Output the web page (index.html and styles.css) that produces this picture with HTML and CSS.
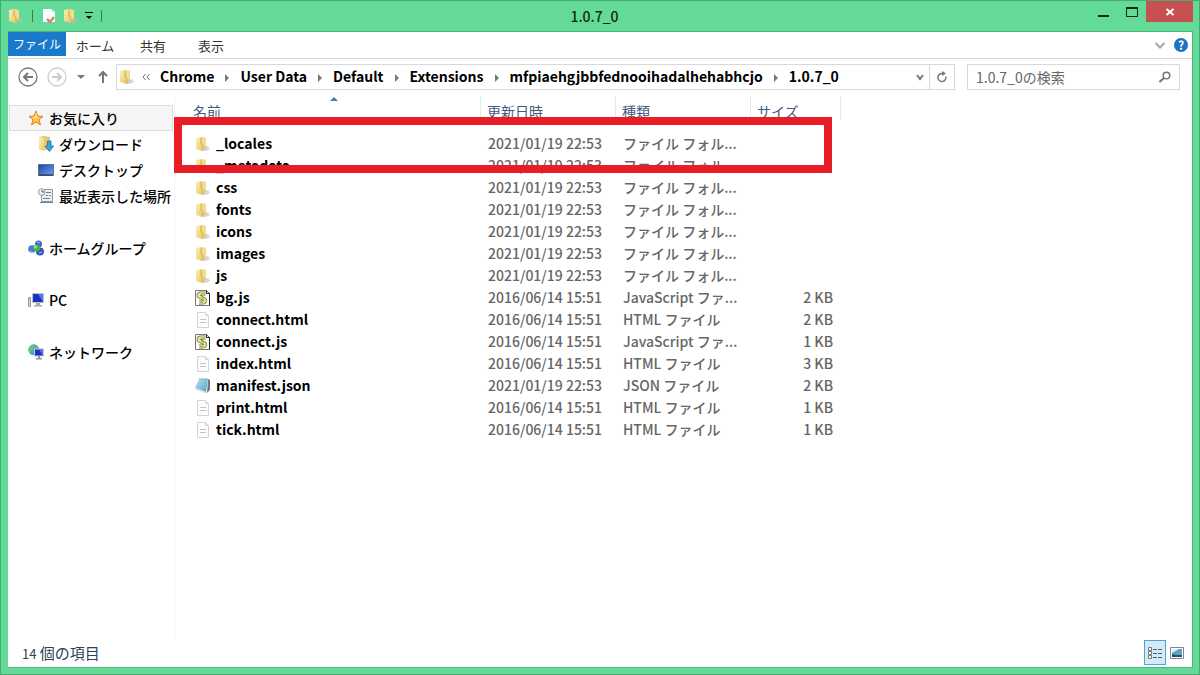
FILE: index.html
```html
<!DOCTYPE html>
<html lang="ja">
<head>
<meta charset="utf-8">
<title>1.0.7_0</title>
<link rel="stylesheet" href="styles.css">
</head>
<body>
<svg class="sprite" aria-hidden="true">
  <defs>
    <linearGradient id="gold" x1="0" x2="1" y1="0" y2="1"><stop offset="0" stop-color="#fbf0bb"/><stop offset="1" stop-color="#e6c560"/></linearGradient>
    <linearGradient id="blue" x1="0" x2="1" y1="0" y2="1"><stop offset="0" stop-color="#1c3fae"/><stop offset="1" stop-color="#6da4ee"/></linearGradient>
    <linearGradient id="note" x1="0" x2="1" y1="0" y2="1"><stop offset="0" stop-color="#bfe6ef"/><stop offset="1" stop-color="#4ba3be"/></linearGradient>
    <symbol id="folder" viewBox="0 0 16 16"><path d="M9 11l4-1 2 3-4 2H5z" fill="#bbb" opacity=".6"/><path d="M5 1l6 1v9l-3 3H5z" fill="#e0c262"/><path d="M6 1l5 1v8l-3 2z" fill="#f2dd8e"/><path d="M1 2l5-1v7l2 1v6l-7-2z" fill="url(#gold)"/><path d="M6 2v6l2 1v5" fill="none" stroke="#cfae4c" stroke-width=".8"/></symbol>
    <symbol id="html" viewBox="0 0 16 16"><path d="M2.500 .5h8l3 3v12h-11z" fill="#fcfcfc" stroke="#d4d4d4"/><path d="M10.500 .5v3h3" fill="none" stroke="#d4d4d4"/><path d="M5 7.500h6M5 10.500h6" stroke="#c4c4c4"/></symbol>
    <symbol id="script" viewBox="0 0 16 16"><path d="M.5 .5h11l3 3v12H.5z" fill="#fff" stroke="#777"/><path d="M11.500 .5v3h3v12" fill="none" stroke="#222"/><path d="M10.500 3.500H6C3 3.500 3 6.500 5 7l4 2c2 1 1 3.500-1 3.500H4" fill="none" stroke="#77773a" stroke-width="4"/><path d="M10.500 3.500H6C3 3.500 3 6.500 5 7l4 2c2 1 1 3.500-1 3.500H4" fill="none" stroke="#e4e39a" stroke-width="2.400"/><path d="M6 4h4M6 7l3 2M5 12.500h3" stroke="#8d8d4e" stroke-width=".7"/></symbol>
    <symbol id="json" viewBox="0 0 16 16"><path d="M13 1l2 1v10l-3 3z" fill="#777"/><path d="M4 1h9l-2 13-11-4z" fill="url(#note)"/><path d="M0 11l11 4 1-1" fill="none" stroke="#ddd"/><path d="M4 1h9" stroke="#89aeb9"/></symbol>
    <symbol id="star" viewBox="0 0 16 16"><path d="M8 1l2 5 5 .4-4 3.300L12.500 15 8 12l-4.500 3L5 9.700 1 6.400 6 6z" fill="#ffc74a" stroke="#e47f25"/><path d="M8 3l1 4-4 1" fill="none" stroke="#ffeaa0"/></symbol>
    <symbol id="download" viewBox="0 0 16 16"><path d="M1 1l5-1 6 1v13H3l-2-1z" fill="#e4c768"/><path d="M1 1l5 1 1 13-6-2z" fill="url(#gold)"/><path d="M9.500 5h3.500v5h2.500l-4 5.500-4.500-5.500h2.500z" fill="#38a5e8" stroke="#1771ae" stroke-width=".8"/></symbol>
    <symbol id="desktop" viewBox="0 0 16 16"><path d="M.5 2.500h15v11H.5z" fill="url(#blue)" stroke="#66707d"/><path d="M1 13h14" stroke="#1d2a43"/></symbol>
    <symbol id="recent" viewBox="0 0 16 16"><path d="M5 1.500h9.500v12H3.500V7" fill="#edf1f5" stroke="#8c98a4"/><path d="M8 4.500h5M8 7.500h2m1 0h2M5 10.500h7M2 14.500h13" stroke="#6684a0"/><circle cx="3.800" cy="4" r="3.300" fill="#f7f7f7" stroke="#8c98a4"/><path d="M4 2v2h2" fill="none" stroke="#555"/></symbol>
    <symbol id="homegroup" viewBox="0 0 16 16"><circle cx="10.500" cy="4" r="3.500" fill="#3e69c9"/><circle cx="4" cy="9" r="3.800" fill="#4a7ad4"/><circle cx="12" cy="11.500" r="4" fill="#3158b3"/><circle cx="8.500" cy="8" r="3.500" fill="#42b252"/><circle cx="7.500" cy="7" r="1.400" fill="#a2e5a0"/><path d="M2 11l4 2M11 13l3-1M9 2l3 1" stroke="#a9c4f4"/></symbol>
    <symbol id="pc" viewBox="0 0 16 16"><path d="M.5 5.500h2v9h-2z" fill="#d5d5d5" stroke="#999"/><path d="M4 1h12v10H4z" fill="#bfc3ca"/><path d="M5 2h10v8H5z" fill="#1b2fc4"/><path d="M10 2h5v8z" fill="#5876e4"/><path d="M8 11h4v2h2v1.500H6V13h2z" fill="#a9a9a9"/></symbol>
    <symbol id="network" viewBox="0 0 16 16"><circle cx="5.800" cy="5.800" r="5.500" fill="#4ba6cc"/><path d="M2 3c3-3 5-1 4 1S3 6 2 9C0 7 0 5 2 3zM8 1l3 3-3 1z" fill="#6ec46a"/><path d="M6 4.500h10v8H6z" fill="#c5c9d1"/><path d="M7 5.500h8v6H7z" fill="#1c32c4"/><path d="M11 5.500h4v6z" fill="#5674e2"/><path d="M10 12h2v2h2v1.500H8V14h2z" fill="#8d97a3"/></symbol>
    <symbol id="props" viewBox="0 0 16 16"><path d="M2 1h8l4 3v10H2z" fill="#fff"/><path d="M10 1v3h4" fill="#dde3e6"/><path d="M6 11l3 3 4-5" fill="none" stroke="#e0806c" stroke-width="2.500"/></symbol>
  </defs>
</svg>
<div class="window">
  <header class="titlebar">
    <div class="quick">
      <svg class="icon"><use href="#folder"/></svg>
      <span class="bar"></span>
      <button class="plain" aria-label="プロパティ"><svg class="icon"><use href="#props"/></svg></button>
      <button class="plain" aria-label="新しいフォルダー"><svg class="icon"><use href="#folder"/></svg></button>
      <button class="plain" aria-label="カスタマイズ"><svg class="tiny" viewBox="0 0 8 8"><path d="M0 .5h8" stroke="#000"/><path d="M1 4h6L4 7z"/></svg></button>
      <span class="bar"></span>
    </div>
    <h1 class="title">1.0.7_0</h1>
    <div class="controls">
      <button class="plain ctl" aria-label="最小化"><svg viewBox="0 0 12 12"><path d="M0 9h11v2H0z"/></svg></button>
      <button class="plain ctl" aria-label="最大化"><svg viewBox="0 0 12 12"><path d="M.5 1.500h11v9H.5z" fill="none" stroke="#10291b"/><path d="M0 1h12v2H0z"/></svg></button>
      <button class="plain close" aria-label="閉じる"><svg viewBox="0 0 12 12"><path d="M2.500 3l7 6m0-6l-7 6" stroke="#fff" stroke-width="2"/></svg></button>
    </div>
  </header>
  <main class="client">
    <nav class="tabs">
      <button class="tab file">ファイル</button>
      <button class="tab">ホーム</button>
      <button class="tab">共有</button>
      <button class="tab">表示</button>
      <div class="tab-tools">
        <button class="plain" aria-label="リボンの展開"><svg class="chev" viewBox="0 0 12 12"><path d="M1.500 4L6 8.500 10.500 4" fill="none" stroke="#a6a6a6" stroke-width="2"/></svg></button>
        <button class="help" aria-label="ヘルプ">?</button>
      </div>
    </nav>
    <div class="navrow">
      <button class="plain back" aria-label="戻る"><svg viewBox="0 0 20 20"><circle cx="10" cy="10" r="9" fill="none" stroke="#777" stroke-width="1.300"/><path d="M15 10H6m4-4l-4 4 4 4" fill="none" stroke="#777" stroke-width="2"/></svg></button>
      <button class="plain fwd" aria-label="進む"><svg viewBox="0 0 20 20"><circle cx="10" cy="10" r="9" fill="none" stroke="#ccc" stroke-width="1.300"/><path d="M5 10h9m-4-4l4 4-4 4" fill="none" stroke="#ccc" stroke-width="2"/></svg></button>
      <button class="plain hist" aria-label="履歴"><svg viewBox="0 0 8 8"><path d="M0 2h8L4 6z" fill="#777"/></svg></button>
      <button class="plain up" aria-label="上へ"><svg viewBox="0 0 12 14"><path d="M6 13V2M2 6l4-4 4 4" fill="none" stroke="#777" stroke-width="2"/></svg></button>
      <div class="address">
        <svg class="icon"><use href="#folder"/></svg>
        <svg class="more" viewBox="0 0 8 8"><path d="M3.500 1L1 4l2.500 3M7.500 1L5 4l2.500 3" fill="none" stroke="#777"/></svg>
        <a class="crumb" href="#">Chrome</a>
        <a class="crumb" href="#">User Data</a>
        <a class="crumb" href="#">Default</a>
        <a class="crumb" href="#">Extensions</a>
        <a class="crumb" href="#">mfpiaehgjbbfednooihadalhehabhcjo</a>
        <a class="crumb" href="#">1.0.7_0</a>
        <button class="plain drop" aria-label="以前の場所"><svg viewBox="0 0 10 10"><path d="M2 3l3 4 3-4" fill="none" stroke="#777" stroke-width="2"/></svg></button>
        <button class="plain refresh" aria-label="更新"><svg viewBox="0 0 12 12"><path d="M7 2.500H5.500a4 4 0 1 0 4.300 3" fill="none" stroke="#777" stroke-width="1.500"/><path d="M6 0l4 2.500L6 5z" fill="#777"/></svg></button>
      </div>
      <div class="search">
        <input type="search" aria-label="検索" placeholder="1.0.7_0の検索">
        <svg viewBox="0 0 12 12"><circle cx="7.500" cy="4.500" r="3.300" fill="none" stroke="#777" stroke-width="1.500"/><path d="M5 7l-4.500 4" stroke="#777" stroke-width="2"/></svg>
      </div>
    </div>
    <div class="panes">
      <aside class="sidebar">
        <ul class="group">
          <li class="item selected"><svg class="icon"><use href="#star"/></svg>お気に入り</li>
          <li class="item child"><svg class="icon"><use href="#download"/></svg>ダウンロード</li>
          <li class="item child"><svg class="icon"><use href="#desktop"/></svg>デスクトップ</li>
          <li class="item child"><svg class="icon"><use href="#recent"/></svg>最近表示した場所</li>
        </ul>
        <ul class="group"><li class="item"><svg class="icon"><use href="#homegroup"/></svg>ホームグループ</li></ul>
        <ul class="group"><li class="item"><svg class="icon"><use href="#pc"/></svg>PC</li></ul>
        <ul class="group"><li class="item"><svg class="icon"><use href="#network"/></svg>ネットワーク</li></ul>
      </aside>
      <section class="files">
        <table>
          <colgroup><col class="c-name"><col class="c-date"><col class="c-type"><col class="c-size"></colgroup>
          <thead><tr><th>名前<svg class="sort" viewBox="0 0 8 4"><path d="M0 4l4-4 4 4z" fill="#4f7fa0"/></svg></th><th>更新日時</th><th>種類</th><th>サイズ</th></tr></thead>
          <tbody>
            <tr><td><svg class="icon"><use href="#folder"/></svg>_locales</td><td>2021/01/19 22:53</td><td>ファイル フォル...</td><td></td></tr>
            <tr><td><svg class="icon"><use href="#folder"/></svg>_metadata</td><td>2021/01/19 22:53</td><td>ファイル フォル...</td><td></td></tr>
            <tr><td><svg class="icon"><use href="#folder"/></svg>css</td><td>2021/01/19 22:53</td><td>ファイル フォル...</td><td></td></tr>
            <tr><td><svg class="icon"><use href="#folder"/></svg>fonts</td><td>2021/01/19 22:53</td><td>ファイル フォル...</td><td></td></tr>
            <tr><td><svg class="icon"><use href="#folder"/></svg>icons</td><td>2021/01/19 22:53</td><td>ファイル フォル...</td><td></td></tr>
            <tr><td><svg class="icon"><use href="#folder"/></svg>images</td><td>2021/01/19 22:53</td><td>ファイル フォル...</td><td></td></tr>
            <tr><td><svg class="icon"><use href="#folder"/></svg>js</td><td>2021/01/19 22:53</td><td>ファイル フォル...</td><td></td></tr>
            <tr><td><svg class="icon"><use href="#script"/></svg>bg.js</td><td>2016/06/14 15:51</td><td>JavaScript ファ...</td><td>2 KB</td></tr>
            <tr><td><svg class="icon"><use href="#html"/></svg>connect.html</td><td>2016/06/14 15:51</td><td>HTML ファイル</td><td>2 KB</td></tr>
            <tr><td><svg class="icon"><use href="#script"/></svg>connect.js</td><td>2016/06/14 15:51</td><td>JavaScript ファ...</td><td>1 KB</td></tr>
            <tr><td><svg class="icon"><use href="#html"/></svg>index.html</td><td>2016/06/14 15:51</td><td>HTML ファイル</td><td>3 KB</td></tr>
            <tr><td><svg class="icon"><use href="#json"/></svg>manifest.json</td><td>2021/01/19 22:53</td><td>JSON ファイル</td><td>2 KB</td></tr>
            <tr><td><svg class="icon"><use href="#html"/></svg>print.html</td><td>2016/06/14 15:51</td><td>HTML ファイル</td><td>1 KB</td></tr>
            <tr><td><svg class="icon"><use href="#html"/></svg>tick.html</td><td>2016/06/14 15:51</td><td>HTML ファイル</td><td>1 KB</td></tr>
          </tbody>
        </table>
        <div class="highlight"></div>
      </section>
    </div>
    <footer class="status">
      <span><small>14</small> 個の項目</span>
      <div class="views">
        <button class="plain view on" aria-label="詳細"><svg viewBox="0 0 16 16"><path d="M1.500 2.500h3v3h-3zM1.500 6.500h3v3h-3zM1.500 10.500h3v3h-3z" fill="#fff" stroke="#777"/><path d="M6 4.500h4m1 0h4M6 8.500h4m1 0h4M6 12.500h4m1 0h4" stroke="#4c6478"/></svg></button>
        <button class="plain view" aria-label="大アイコン"><svg viewBox="0 0 16 16"><path d="M1.500 2.500h13v11h-13z" fill="#fff" stroke="#7b8791"/><path d="M3 4h10v8H3z" fill="#5aa3c6"/><path d="M3 4h7l-7 4z" fill="#d8eff9"/><path d="M3 9l4 1 6 0v2H3z" fill="#275468"/></svg></button>
      </div>
    </footer>
  </main>
</div>
</body>
</html>
```
FILE: styles.css
```css
* { box-sizing: border-box; }
body { margin: 0; font-family: "Noto Sans CJK JP", "Noto Sans", sans-serif; font-size: 14px; line-height: 22px; color: #000; }
.sprite { position: absolute; width: 0; height: 0; }
button, input { font: inherit; color: inherit; }
.plain { display: flex; align-items: center; justify-content: center; padding: 0; border: 0; background: none; }
.icon { width: 16px; height: 16px; flex: none; }
.window { display: flex; flex-direction: column; min-height: 100vh; padding: 0 6px 6px 7px; border: 1px solid #42ad70; background: #63da97; }
.titlebar { display: grid; grid-template-columns: 1fr auto 1fr; height: 30px; }
.quick { display: flex; align-items: center; gap: 7px; height: 30px; }
.quick .plain + .plain { margin-left: -1px; }
.bar { width: 1px; height: 12px; margin: 0 1px; background: #347a52; }
.tiny { width: 8px; height: 8px; }
.title { margin: 0 12px 0 0; font-size: 14px; font-weight: 500; line-height: 31px; color: #10291b; }
.controls { display: flex; justify-content: flex-end; align-items: flex-start; }
.controls svg { width: 12px; height: 12px; fill: #10291b; }
.ctl { width: 28px; height: 21px; }
.close { width: 47px; height: 21px; background: #c75050; }
.client { display: flex; flex-direction: column; flex: 1; border: 1px solid #4cb67a; border-left: 0; background: #fff; }
.tabs { display: flex; height: 27px; border-bottom: 1px solid #d5d6d7; }
.tab { width: 58px; padding: 2px 0 0; border: 0; background: none; font-size: 13px; line-height: 22px; color: #333; white-space: nowrap; }
.file { height: 24px; padding: 0; background: #1979ca; font-size: 12px; color: #fff; }
.tab-tools { display: flex; align-items: center; gap: 8px; margin-left: auto; padding-right: 4px; }
.chev { width: 12px; height: 12px; }
.help { width: 14px; height: 14px; padding: 0; border: 0; border-radius: 50%; background: #1c72c4; color: #fff; font-size: 12px; font-weight: 700; line-height: 14px; }
.navrow { display: flex; align-items: center; height: 36px; padding: 0 12px 0 10px; }
.back, .fwd { width: 20px; height: 20px; margin-right: 9px; }
.back svg, .fwd svg { width: 20px; height: 20px; }
.hist { width: 10px; margin-right: 11px; }
.hist svg { width: 8px; height: 8px; }
.up { width: 12px; margin-right: 7px; }
.up svg { width: 12px; height: 14px; }
.address { display: flex; align-items: center; flex: 1; height: 26px; padding-left: 2px; border: 1px solid #d9d9d9; font-weight: 700; line-height: 20px; white-space: nowrap; }
.address .crumb { padding-bottom: 2px; }
.more { width: 8px; height: 8px; margin: 0 10px 0 7px; }
.crumb { color: #000; text-decoration: none; }
.crumb + .crumb::before { content: ""; display: inline-block; margin: 0 11px; border: 4px solid transparent; border-left-color: #777; border-right: 0; }
.drop { width: 18px; height: 24px; margin-left: auto; }
.drop svg { width: 10px; height: 10px; }
.refresh { width: 25px; height: 24px; border-left: 1px solid #d9d9d9; }
.refresh svg { width: 12px; height: 12px; }
.search { display: flex; align-items: center; width: 213px; height: 26px; margin-left: 12px; padding: 0 8px; border: 1px solid #d9d9d9; }
.search input { flex: 1; min-width: 0; padding: 0; border: 0; outline: 0; background: none; }
.search input::placeholder { color: #666; opacity: 1; }
.search svg { width: 12px; height: 12px; }
.panes { display: flex; flex: 1; }
.sidebar { width: 167px; padding: 10px 1px 0; border-right: 1px solid #f3f5f6; }
.group { margin: 0 0 26px; padding: 0; list-style: none; }
.item { display: flex; align-items: center; gap: 5px; height: 26px; padding-left: 19px; font-weight: 500; white-space: nowrap; }
.selected { padding-left: 18px; border: 1px solid #dedede; background: #f6f6f6; }
.child { padding-left: 29px; }
.files { position: relative; flex: 1; padding-left: 6px; }
table { width: 660px; table-layout: fixed; border-collapse: collapse; }
.c-name { width: 300px; }
.c-date, .c-type { width: 135px; }
.c-size { width: 90px; }
th { position: relative; height: 37px; padding: 5px 6px 10px; background: linear-gradient(#e1ecf3, #e1ecf3) right 1px / 1px 24px no-repeat; text-align: left; font-weight: 400; color: #43597c; }
th:first-child { padding-left: 12px; }
.sort { position: absolute; left: 149px; top: 2px; width: 8px; height: 4px; }
td { height: 22px; padding: 0 7px; color: #666; font-weight: 500; white-space: nowrap; }
td:first-child { padding-left: 14px; color: #000; font-weight: 700; }
td:last-child { padding-right: 8px; text-align: right; }
td .icon { margin-right: 5px; vertical-align: -3px; }
.highlight { position: absolute; left: -1px; top: 22px; width: 658px; height: 56px; border: 8px solid #e91d25; }
.status { display: flex; justify-content: space-between; height: 27px; padding: 0 4px 0 14px; line-height: 26px; font-size: 15px; color: #2b4258; }
.status small { font-size: 13px; }
.views { display: flex; }
.view { width: 22px; height: 25px; }
.view svg { width: 16px; height: 16px; }
.on { border: 1px solid #4aa5cf; background: #d3eaf7; }
```
